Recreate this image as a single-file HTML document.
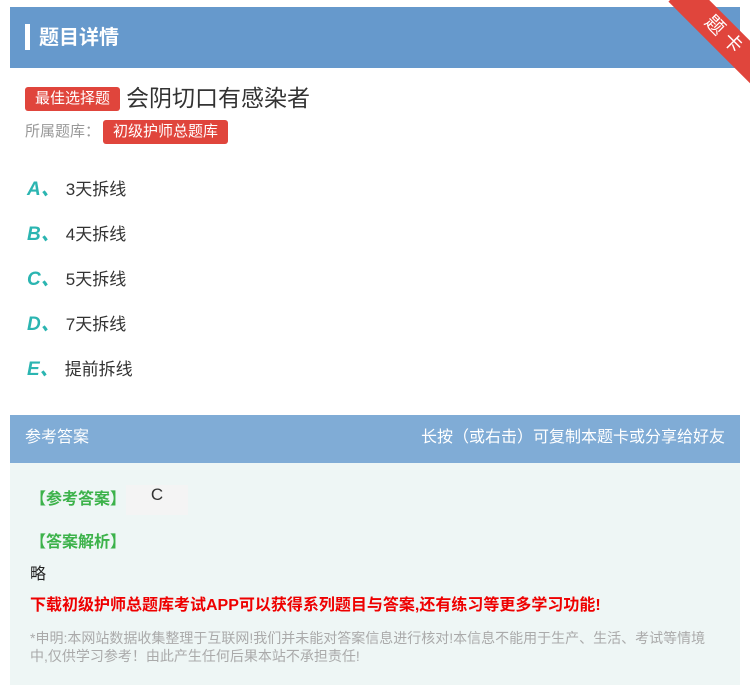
<!DOCTYPE html>
<html><head><meta charset="utf-8"><style>
body{margin:0;width:750px;height:685px;background:#fff;font-family:"Liberation Sans","Noto Sans CJK SC",sans-serif;position:relative;overflow:hidden}
.hd{position:absolute;left:10px;top:7px;width:730px;height:61px;background:#6699cc}
.hd .bar{position:absolute;left:15px;top:17px;width:5px;height:26px;background:#fff}
.hd .t{position:absolute;left:29px;top:14px;color:#fff;font-size:20px;font-weight:bold}
.rib{position:absolute;width:130px;height:30px;background:#e0453c;transform:rotate(45deg);color:#fff;font-size:19px;text-align:center;line-height:30px;right:-40px;top:22px;letter-spacing:6px}
.tag{display:inline-block;background:#e0453c;color:#fff;border-radius:3px;font-size:15px;padding:0 10px;line-height:24px}
.q{position:absolute;left:25px;top:79px;font-size:23px;color:#333}
.q .tag{vertical-align:3px;margin-right:6px}
.lib{position:absolute;left:25px;top:120px;font-size:15px;color:#999}
.lib .tag{margin-left:3px}
.opt{position:absolute;left:27px;font-size:17px;color:#333}
.opt b{color:#2bb5b1;font-style:italic;font-size:19px;margin-right:6px}
.ans{position:absolute;left:10px;top:415px;width:730px;height:270px;background:#eef6f5}
.ah{height:48px;background:#80acd6;color:#fff;font-size:16px;line-height:45px;padding:0 15px}
.ah span{float:right}
.g{position:absolute;left:20px;color:#3cb24a;font-size:16px;font-weight:bold}
</style></head><body>
<div class="hd"><div class="bar"></div><div class="t">题目详情</div></div>
<div class="rib">题卡</div>
<div class="q"><span class="tag">最佳选择题</span>会阴切口有感染者</div>
<div class="lib">所属题库：<span class="tag">初级护师总题库</span></div>
<div class="opt" style="top:174px"><b>A、</b>3天拆线</div>
<div class="opt" style="top:219px"><b>B、</b>4天拆线</div>
<div class="opt" style="top:264px"><b>C、</b>5天拆线</div>
<div class="opt" style="top:309px"><b>D、</b>7天拆线</div>
<div class="opt" style="top:354px"><b>E、</b>提前拆线</div>
<div class="ans">
<div class="ah">参考答案<span>长按（或右击）可复制本题卡或分享给好友</span></div>
<div class="g" style="top:70px">【参考答案】<span style="display:inline-block;width:62px;height:30px;background:#f4f4f4;vertical-align:middle;color:#333;font-weight:normal;font-size:17px;text-align:center">C</span></div>
<div class="g" style="top:113px">【答案解析】</div>
<div style="position:absolute;left:20px;top:145px;font-size:16px;color:#222">略</div>
<div style="position:absolute;left:20px;top:176px;font-size:16px;color:#e00;font-weight:bold">下载初级护师总题库考试APP可以获得系列题目与答案,还有练习等更多学习功能!</div>
<div style="position:absolute;left:20px;top:214px;width:690px;font-size:14px;line-height:18px;color:#aaa">*申明:本网站数据收集整理于互联网!我们并未能对答案信息进行核对!本信息不能用于生产、生活、考试等情境中,仅供学习参考！由此产生任何后果本站不承担责任!</div>
</div>
</body></html>
